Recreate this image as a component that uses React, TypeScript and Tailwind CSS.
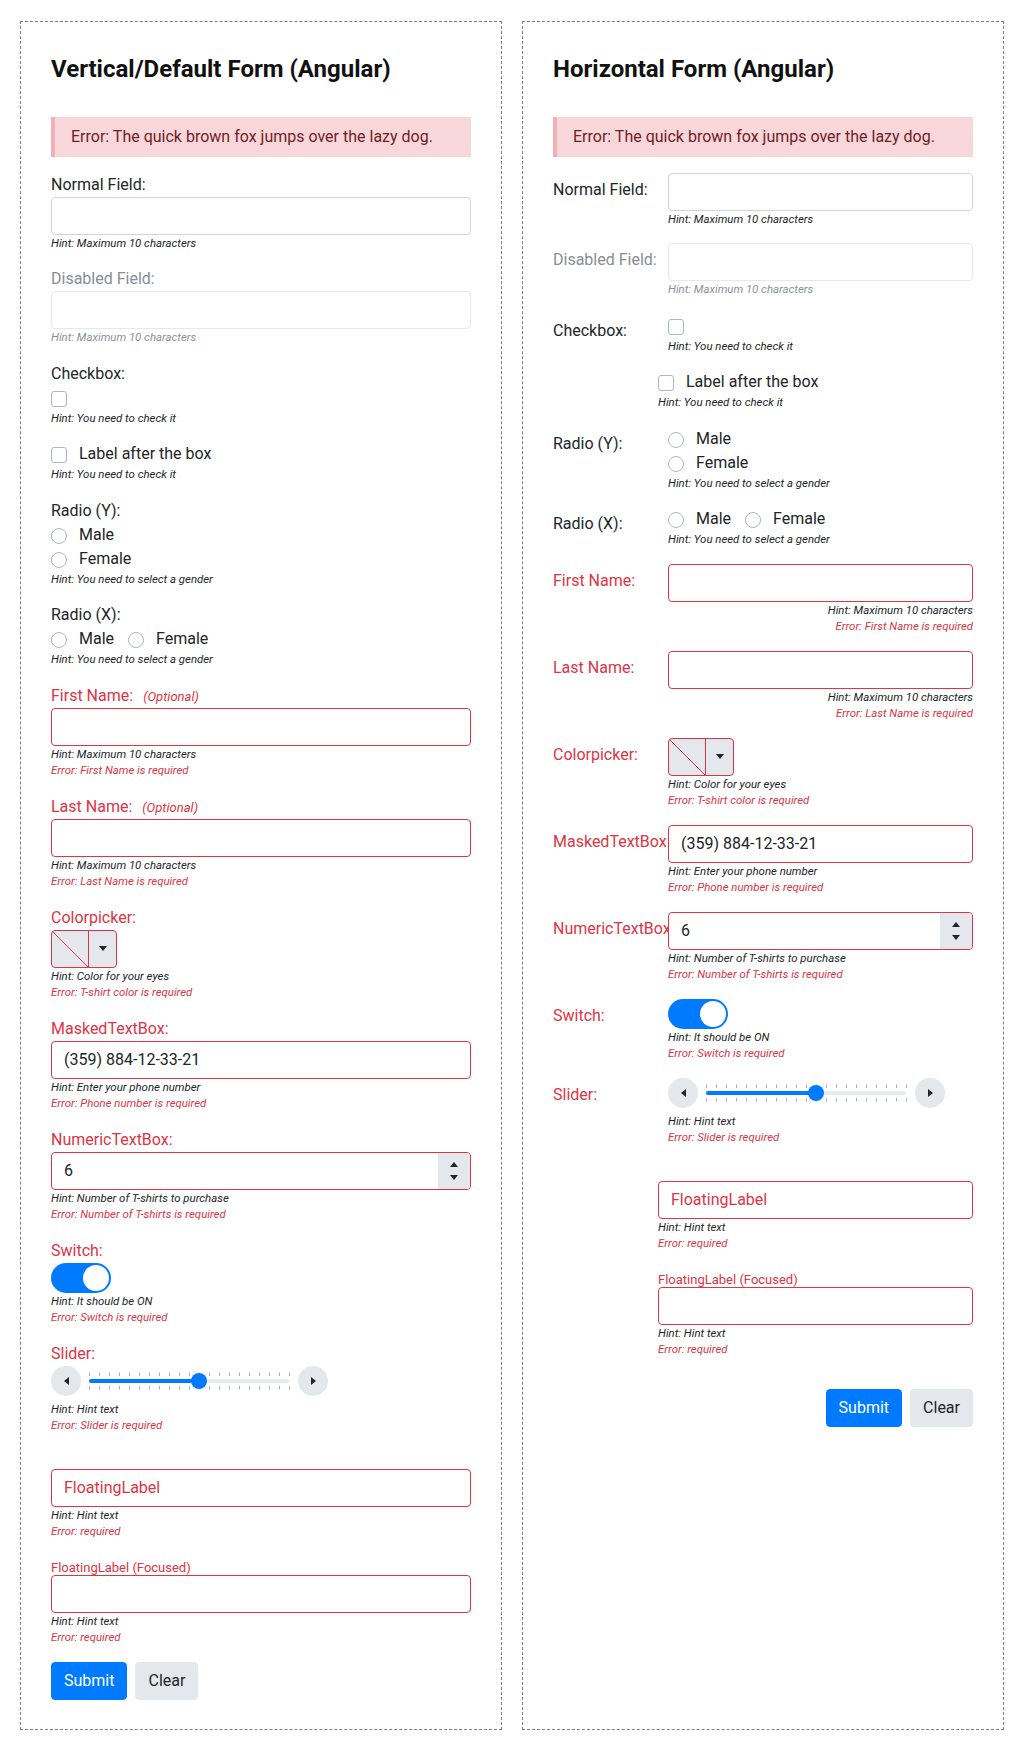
import React from "react";

type Kids = { children?: React.ReactNode };

function Hint({ children, muted = false, right = false }: Kids & { muted?: boolean; right?: boolean }) {
  return (
    <div
      className={
        "text-[11.4px] leading-[16.5px] italic " +
        (muted ? "text-[#8c9196] " : "text-[#212529] ") +
        (right ? "text-right" : "")
      }
    >
      {children}
    </div>
  );
}

function Err({ children, right = false }: Kids & { right?: boolean }) {
  return (
    <div className={"text-[11.4px] leading-[16.5px] italic text-[#dc3545] " + (right ? "text-right" : "")}>
      {children}
    </div>
  );
}

function TextBox({
  value,
  state = "normal",
  valueRed = false,
}: {
  value?: string;
  state?: "normal" | "disabled" | "error";
  valueRed?: boolean;
}) {
  const border =
    state === "error" ? "border-[#dc3545]" : state === "disabled" ? "border-[#e6e9ec]" : "border-[#ced4da]";
  return (
    <div
      className={
        "relative h-[38px] rounded border bg-white px-3 flex items-center text-base leading-6 " +
        border +
        (valueRed ? " text-[#dc3545]" : " text-[#212529]")
      }
    >
      {value}
    </div>
  );
}

function CheckBox() {
  return <span className="block w-4 h-4 rounded-[3px] border border-[#adb5bd] bg-white" />;
}

function RadioDot() {
  return <span className="block w-4 h-4 rounded-full border border-[#adb5bd] bg-white" />;
}

function ColorPicker() {
  return (
    <div className="flex h-[38px] w-[66px] rounded border border-[#dc3545] bg-[#e4e7eb] overflow-hidden">
      <div className="w-[37px] h-full border-r border-[#dc3545]">
        <svg width="36" height="36" viewBox="0 0 36 36" className="block">
          <line x1="0" y1="0" x2="36" y2="36" stroke="#dc3545" strokeWidth="1" />
        </svg>
      </div>
      <div className="flex-1 flex items-center justify-center">
        <svg width="8" height="5" viewBox="0 0 8 5">
          <path d="M0 0H8L4 5Z" fill="#212529" />
        </svg>
      </div>
    </div>
  );
}

function NumericBox() {
  return (
    <div className="relative flex h-[38px] rounded border border-[#dc3545] overflow-hidden bg-white">
      <div className="flex-1 px-3 flex items-center text-base leading-6 text-[#212529]">6</div>
      <div className="w-[32px] bg-[#e4e7eb] flex flex-col items-center justify-center gap-[8px]">
        <svg width="8" height="5" viewBox="0 0 8 5">
          <path d="M0 5H8L4 0Z" fill="#212529" />
        </svg>
        <svg width="8" height="5" viewBox="0 0 8 5">
          <path d="M0 0H8L4 5Z" fill="#212529" />
        </svg>
      </div>
    </div>
  );
}

function Switch() {
  return (
    <div className="w-[60px] h-[30px] rounded-full bg-[#007bff] p-[2px] flex justify-end">
      <div className="w-[26px] h-[26px] rounded-full bg-white" />
    </div>
  );
}

function Slider() {
  const ticks = Array.from({ length: 21 }, (_, i) => i * 10 + 0.5);
  return (
    <div className="flex items-center gap-2 h-[30px] mb-[5px]">
      <div className="w-[30px] h-[30px] rounded-full bg-[#e4e7eb] flex items-center justify-center">
        <svg width="5" height="8" viewBox="0 0 5 8">
          <path d="M5 0V8L0 4Z" fill="#212529" />
        </svg>
      </div>
      <svg width="201" height="30" viewBox="0 0 201 30" className="block">
        {ticks.map((x) => (
          <g key={x}>
            <line x1={x} y1="6.5" x2={x} y2="10" stroke="#a8adb3" strokeWidth="1" />
            <line x1={x} y1="20" x2={x} y2="23.5" stroke="#a8adb3" strokeWidth="1" />
          </g>
        ))}
        <rect x="0" y="13" width="200" height="4" rx="2" fill="#e9ecef" />
        <rect x="0" y="13" width="110" height="4" rx="2" fill="#007bff" />
        <circle cx="110" cy="15" r="8" fill="#007bff" />
      </svg>
      <div className="w-[30px] h-[30px] rounded-full bg-[#e4e7eb] flex items-center justify-center">
        <svg width="5" height="8" viewBox="0 0 5 8">
          <path d="M0 0V8L5 4Z" fill="#212529" />
        </svg>
      </div>
    </div>
  );
}

function Alert() {
  return (
    <div className="mb-4 border-l-4 border-[#f1b0b7] bg-[#f8d7da] pl-4 py-2 text-base leading-6 text-[#721c24]">
      Error: The quick brown fox jumps over the lazy dog.
    </div>
  );
}

function Buttons() {
  return (
    <>
      <div className="h-[38px] px-3 rounded border border-[#007bff] bg-[#007bff] text-white text-base leading-6 flex items-center">
        Submit
      </div>
      <div className="h-[38px] px-3 rounded border border-[#e4e7eb] bg-[#e4e7eb] text-[#212529] text-base leading-6 flex items-center">
        Clear
      </div>
    </>
  );
}

function Label({ children, red = false, muted = false }: Kids & { red?: boolean; muted?: boolean }) {
  return (
    <div
      className={
        "text-base leading-6 whitespace-nowrap " +
        (red ? "text-[#dc3545]" : muted ? "text-[#868e96]" : "text-[#212529]")
      }
    >
      {children}
    </div>
  );
}

function VerticalForm() {
  return (
    <section className="border border-dashed border-[#7d7d7d] px-[30px] pt-[33px] pb-[29px]">
      <h2 className="text-[24px] leading-[28.8px] font-bold text-[#111] mb-[33px]">Vertical/Default Form (Angular)</h2>
      <Alert />

      <div className="mb-4">
        <Label>Normal Field:</Label>
        <TextBox />
        <Hint>Hint: Maximum 10 characters</Hint>
      </div>

      <div className="mb-4">
        <Label muted>Disabled Field:</Label>
        <TextBox state="disabled" />
        <Hint muted>Hint: Maximum 10 characters</Hint>
      </div>

      <div className="mb-4">
        <Label>Checkbox:</Label>
        <div className="h-6 pt-[5px]">
          <CheckBox />
        </div>
        <Hint>Hint: You need to check it</Hint>
      </div>

      <div className="mb-4">
        <div className="flex h-6 items-start gap-3 text-base leading-6 text-[#212529]">
          <div className="pt-[5px]">
            <CheckBox />
          </div>
          <span>Label after the box</span>
        </div>
        <Hint>Hint: You need to check it</Hint>
      </div>

      <div className="mb-4">
        <Label>Radio (Y):</Label>
        <div className="flex h-6 items-start gap-3 text-base leading-6 text-[#212529]">
          <div className="pt-[5px]">
            <RadioDot />
          </div>
          <span>Male</span>
        </div>
        <div className="flex h-6 items-start gap-3 text-base leading-6 text-[#212529]">
          <div className="pt-[5px]">
            <RadioDot />
          </div>
          <span>Female</span>
        </div>
        <Hint>Hint: You need to select a gender</Hint>
      </div>

      <div className="mb-4">
        <Label>Radio (X):</Label>
        <div className="flex h-6 items-start text-base leading-6 text-[#212529]">
          <div className="pt-[5px]">
            <RadioDot />
          </div>
          <span className="ml-3">Male</span>
          <div className="pt-[5px] ml-[14px]">
            <RadioDot />
          </div>
          <span className="ml-3">Female</span>
        </div>
        <Hint>Hint: You need to select a gender</Hint>
      </div>

      <div className="mb-4">
        <div className="flex items-baseline text-[#dc3545]">
          <span className="text-base leading-6">First Name:</span>
          <span className="ml-[10px] text-[13px] italic">(Optional)</span>
        </div>
        <TextBox state="error" />
        <Hint>Hint: Maximum 10 characters</Hint>
        <Err>Error: First Name is required</Err>
      </div>

      <div className="mb-4">
        <div className="flex items-baseline text-[#dc3545]">
          <span className="text-base leading-6">Last Name:</span>
          <span className="ml-[10px] text-[13px] italic">(Optional)</span>
        </div>
        <TextBox state="error" />
        <Hint>Hint: Maximum 10 characters</Hint>
        <Err>Error: Last Name is required</Err>
      </div>

      <div className="mb-4">
        <Label red>Colorpicker:</Label>
        <ColorPicker />
        <Hint>Hint: Color for your eyes</Hint>
        <Err>Error: T-shirt color is required</Err>
      </div>

      <div className="mb-4">
        <Label red>MaskedTextBox:</Label>
        <TextBox state="error" value="(359) 884-12-33-21" />
        <Hint>Hint: Enter your phone number</Hint>
        <Err>Error: Phone number is required</Err>
      </div>

      <div className="mb-4">
        <Label red>NumericTextBox:</Label>
        <NumericBox />
        <Hint>Hint: Number of T-shirts to purchase</Hint>
        <Err>Error: Number of T-shirts is required</Err>
      </div>

      <div className="mb-4">
        <Label red>Switch:</Label>
        <Switch />
        <Hint>Hint: It should be ON</Hint>
        <Err>Error: Switch is required</Err>
      </div>

      <div className="mb-4">
        <Label red>Slider:</Label>
        <Slider />
        <Hint>Hint: Hint text</Hint>
        <Err>Error: Slider is required</Err>
      </div>

      <div className="mb-4 pt-[19px]">
        <TextBox state="error" value="FloatingLabel" valueRed />
        <Hint>Hint: Hint text</Hint>
        <Err>Error: required</Err>
      </div>

      <div className="mb-4">
        <div className="h-[19px] pt-[4px] text-[13px] leading-[15px] text-[#dc3545] whitespace-nowrap">
          FloatingLabel (Focused)
        </div>
        <TextBox state="error" />
        <Hint>Hint: Hint text</Hint>
        <Err>Error: required</Err>
      </div>

      <div className="flex gap-2">
        <Buttons />
      </div>
    </section>
  );
}

function Row({
  label,
  red = false,
  muted = false,
  children,
}: Kids & { label: string; red?: boolean; muted?: boolean }) {
  return (
    <div className="flex mb-4">
      <div
        className={
          "w-[115px] shrink-0 pt-[5px] text-base leading-6 whitespace-nowrap " +
          (red ? "text-[#dc3545]" : muted ? "text-[#868e96]" : "text-[#212529]")
        }
      >
        {label}
      </div>
      <div className="flex-1 min-w-0">{children}</div>
    </div>
  );
}

function HorizontalForm() {
  return (
    <section className="border border-dashed border-[#7d7d7d] px-[30px] pt-[33px] pb-[29px]">
      <h2 className="text-[24px] leading-[28.8px] font-bold text-[#111] mb-[33px]">Horizontal Form (Angular)</h2>
      <Alert />

      <Row label="Normal Field:">
        <TextBox />
        <Hint>Hint: Maximum 10 characters</Hint>
      </Row>

      <Row label="Disabled Field:" muted>
        <TextBox state="disabled" />
        <Hint muted>Hint: Maximum 10 characters</Hint>
      </Row>

      <Row label="Checkbox:">
        <div className="h-6 pt-[5px]">
          <CheckBox />
        </div>
        <Hint>Hint: You need to check it</Hint>
      </Row>

      <div className="mb-4 ml-[105px]">
        <div className="flex h-6 items-start gap-3 text-base leading-6 text-[#212529]">
          <div className="pt-[5px]">
            <CheckBox />
          </div>
          <span>Label after the box</span>
        </div>
        <Hint>Hint: You need to check it</Hint>
      </div>

      <Row label="Radio (Y):">
        <div className="flex h-6 items-start gap-3 text-base leading-6 text-[#212529]">
          <div className="pt-[5px]">
            <RadioDot />
          </div>
          <span>Male</span>
        </div>
        <div className="flex h-6 items-start gap-3 text-base leading-6 text-[#212529]">
          <div className="pt-[5px]">
            <RadioDot />
          </div>
          <span>Female</span>
        </div>
        <Hint>Hint: You need to select a gender</Hint>
      </Row>

      <Row label="Radio (X):">
        <div className="flex h-6 items-start text-base leading-6 text-[#212529]">
          <div className="pt-[5px]">
            <RadioDot />
          </div>
          <span className="ml-3">Male</span>
          <div className="pt-[5px] ml-[14px]">
            <RadioDot />
          </div>
          <span className="ml-3">Female</span>
        </div>
        <Hint>Hint: You need to select a gender</Hint>
      </Row>

      <Row label="First Name:" red>
        <TextBox state="error" />
        <Hint right>Hint: Maximum 10 characters</Hint>
        <Err right>Error: First Name is required</Err>
      </Row>

      <Row label="Last Name:" red>
        <TextBox state="error" />
        <Hint right>Hint: Maximum 10 characters</Hint>
        <Err right>Error: Last Name is required</Err>
      </Row>

      <Row label="Colorpicker:" red>
        <ColorPicker />
        <Hint>Hint: Color for your eyes</Hint>
        <Err>Error: T-shirt color is required</Err>
      </Row>

      <Row label="MaskedTextBox:" red>
        <TextBox state="error" value="(359) 884-12-33-21" />
        <Hint>Hint: Enter your phone number</Hint>
        <Err>Error: Phone number is required</Err>
      </Row>

      <Row label="NumericTextBox:" red>
        <NumericBox />
        <Hint>Hint: Number of T-shirts to purchase</Hint>
        <Err>Error: Number of T-shirts is required</Err>
      </Row>

      <Row label="Switch:" red>
        <Switch />
        <Hint>Hint: It should be ON</Hint>
        <Err>Error: Switch is required</Err>
      </Row>

      <Row label="Slider:" red>
        <Slider />
        <Hint>Hint: Hint text</Hint>
        <Err>Error: Slider is required</Err>
      </Row>

      <div className="mb-4 ml-[105px] pt-[19px]">
        <TextBox state="error" value="FloatingLabel" valueRed />
        <Hint>Hint: Hint text</Hint>
        <Err>Error: required</Err>
      </div>

      <div className="mb-4 ml-[105px]">
        <div className="h-[19px] pt-[4px] text-[13px] leading-[15px] text-[#dc3545] whitespace-nowrap">
          FloatingLabel (Focused)
        </div>
        <TextBox state="error" />
        <Hint>Hint: Hint text</Hint>
        <Err>Error: required</Err>
      </div>

      <div className="mt-[31px] flex justify-end gap-2">
        <Buttons />
      </div>
    </section>
  );
}

export default function App() {
  return (
    <div className="bg-white font-[Roboto,sans-serif] text-[#212529]">
      <div className="grid grid-cols-2 gap-5 px-5 pt-[21px] pb-5">
        <VerticalForm />
        <HorizontalForm />
      </div>
    </div>
  );
}
